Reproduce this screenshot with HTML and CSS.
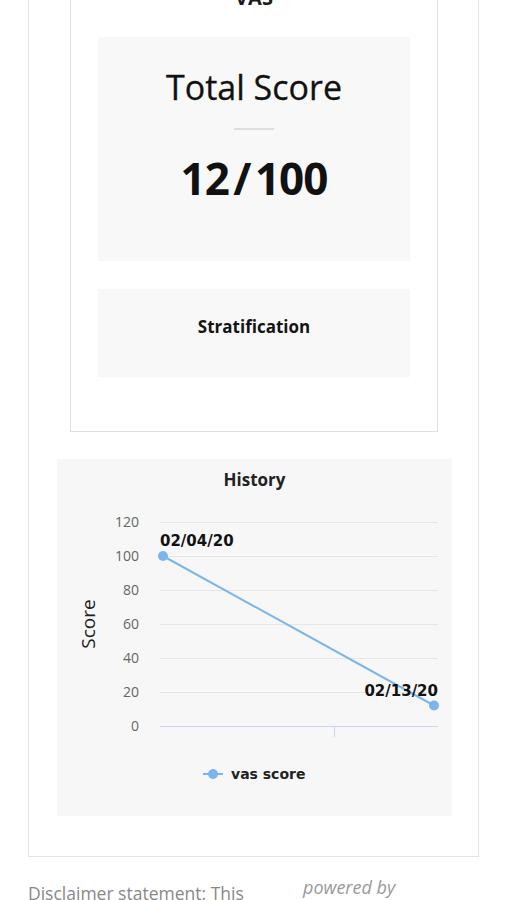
FILE: index.html
```html
<!DOCTYPE html>
<html>
<head>
<meta charset="utf-8">
<link rel="stylesheet" href="styles.css">
</head>
<body>
<div class="page">
  <div class="outer-card">
    <div class="inner-card">
      <div class="card-title">VAS</div>
      <div class="score-box">
        <div class="score-label">Total Score</div>
        <div class="divider"></div>
        <div class="score-value">12 / 100</div>
      </div>
      <div class="strat-box">Stratification</div>
    </div>
    <div class="chart-box">
      <svg class="chart" width="395" height="357" viewBox="57 458 395 357">
        <text class="chart-title" x="254.5" y="485" text-anchor="middle">History</text>
        <g class="grid">
          <line x1="160" y1="521.5" x2="438" y2="521.5"/>
          <line x1="160" y1="555.5" x2="438" y2="555.5"/>
          <line x1="160" y1="589.5" x2="438" y2="589.5"/>
          <line x1="160" y1="623.5" x2="438" y2="623.5"/>
          <line x1="160" y1="657.5" x2="438" y2="657.5"/>
          <line x1="160" y1="691.5" x2="438" y2="691.5"/>
        </g>
        <line class="axis" x1="160" y1="725.5" x2="438" y2="725.5"/>
        <line class="axis" x1="334.5" y1="725.5" x2="334.5" y2="736"/>
        <g class="ylabels" text-anchor="end">
          <text x="139" y="526">120</text>
          <text x="139" y="560">100</text>
          <text x="139" y="594">80</text>
          <text x="139" y="628">60</text>
          <text x="139" y="662">40</text>
          <text x="139" y="696">20</text>
          <text x="139" y="730">0</text>
        </g>
        <text class="ytitle" transform="translate(95 623) rotate(-90)" text-anchor="middle">Score</text>
        <polyline class="series" points="163,555 434,704.5"/>
        <circle class="pt" cx="163" cy="555" r="5"/>
        <circle class="pt" cx="434" cy="704.5" r="5"/>
        <text class="dlabel" x="160" y="544.5">02/04/20</text>
        <text class="dlabel" x="438" y="694.5" text-anchor="end">02/13/20</text>
        <line class="series" x1="203" y1="773" x2="223" y2="773"/>
        <circle class="pt" cx="213" cy="773" r="5"/>
        <text class="legend" x="231" y="778">vas score</text>
      </svg>
    </div>
  </div>
  <div class="footer">
    <div class="disclaimer">Disclaimer statement: This</div>
    <div class="powered">powered by</div>
  </div>
</div>
</body>
</html>
```
FILE: styles.css
```css
html, body {
  margin: 0;
  padding: 0;
  background: #ffffff;
  overflow: hidden;
}
body {
  font-family: "Open Sans", "Noto Sans", sans-serif;
  color: #1a1a1a;
}
.page {
  margin-top: -58px;
}
.outer-card {
  margin-left: 28px;
  width: 449px;
  border: 1px solid #e4e4e4;
  padding-bottom: 40px;
}
.inner-card {
  width: 366px;
  margin: 0 auto 0 41px;
  border: 1px solid #e0e0e0;
  border-top: none;
  padding-top: 43px;
  padding-bottom: 54px;
}
.card-title {
  text-align: center;
  font-weight: 700;
  font-size: 20px;
  line-height: 24px;
  height: 24px;
  color: #1a1a1a;
}
.score-box {
  width: 312px;
  height: 224px;
  margin: 27px auto 0;
  background: #f8f8f8;
  box-sizing: border-box;
  padding-top: 27px;
  text-align: center;
}
.score-label {
  font-size: 34px;
  line-height: 46px;
  color: #111;
  -webkit-text-stroke: 0.3px #111;
}
.divider {
  width: 40px;
  height: 2px;
  background: #dedede;
  margin: 18px auto 0;
}
.score-value {
  margin-top: 18px;
  font-size: 44px;
  line-height: 60px;
  font-weight: 700;
  color: #111;
  letter-spacing: -1px;
  word-spacing: -6px;
}
.strat-box {
  width: 312px;
  height: 88px;
  margin: 28px auto 0;
  background: #f8f8f8;
  box-sizing: border-box;
  padding-bottom: 13px;
  display: flex;
  align-items: center;
  justify-content: center;
  font-size: 17px;
  font-weight: 700;
  color: #141414;
}
.chart-box {
  width: 395px;
  height: 357px;
  margin: 27px 0 0 28px;
  background: #f7f7f7;
}
.chart {
  display: block;
  font-family: "DejaVu Sans", "Open Sans", sans-serif;
}
.chart-title {
  font-family: "Open Sans", sans-serif;
  font-weight: 700;
  font-size: 17px;
  fill: #222;
}
.grid line {
  stroke: #e6e6e6;
  stroke-width: 1;
}
.axis {
  stroke: #ccd6eb;
  stroke-width: 1;
}
.ylabels text {
  font-family: "Open Sans", sans-serif;
  font-size: 14px;
  fill: #666;
}
.ytitle {
  font-family: "Open Sans", sans-serif;
  font-size: 19px;
  fill: #222;
}
.series {
  stroke: #7cb5ec;
  stroke-width: 2;
  fill: none;
}
.pt {
  fill: #7cb5ec;
}
.dlabel {
  font-family: "DejaVu Sans", sans-serif;
  font-weight: 700;
  font-size: 15px;
  fill: #111;
}
.legend {
  font-family: "DejaVu Sans", sans-serif;
  font-weight: 700;
  font-size: 14px;
  fill: #222;
}
.footer {
  display: flex;
  padding-top: 24px;
  padding-left: 28px;
}
.disclaimer {
  width: 275px;
  font-size: 17.5px;
  color: #888;
  line-height: 24px;
}
.powered {
  font-style: italic;
  font-size: 18px;
  color: #999;
  line-height: 20px;
  margin-top: -4px;
}
```
